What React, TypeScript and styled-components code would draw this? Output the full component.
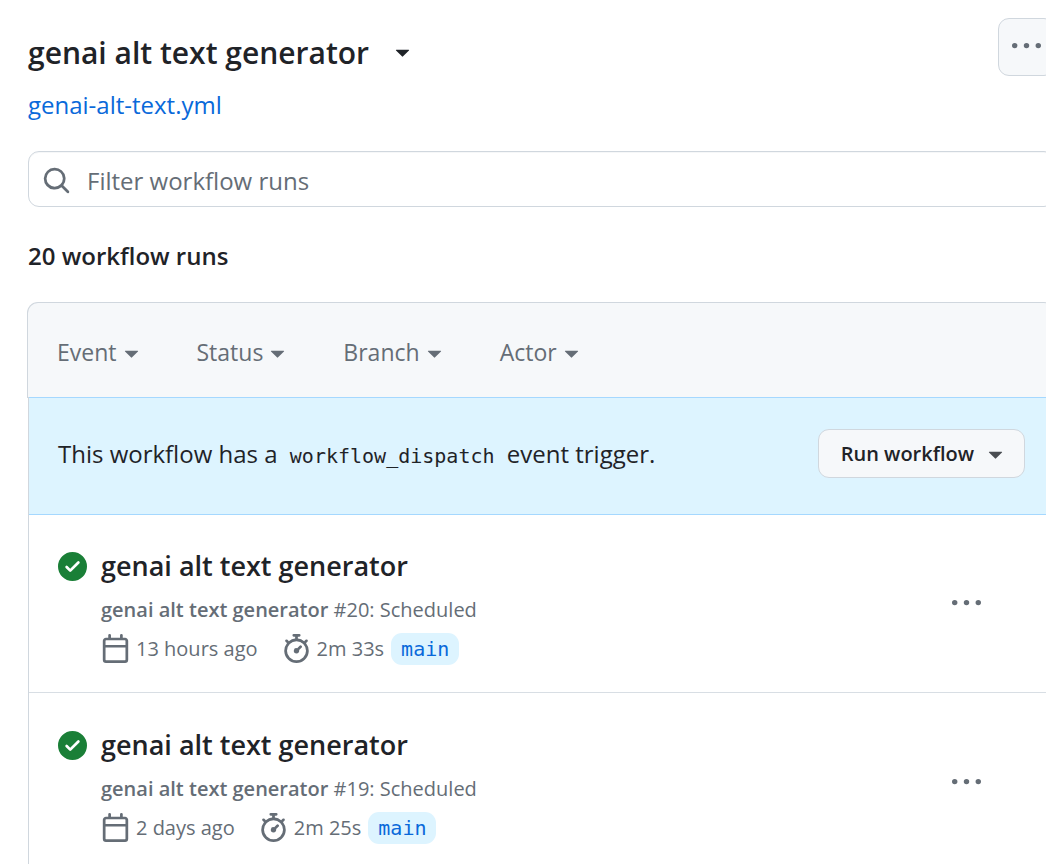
import React from "react";
import styled, { createGlobalStyle } from "styled-components";

const c = {
  fg: "#1f2328",
  muted: "#656d76",
  border: "#d0d7de",
  divider: "#d8dee4",
  subtle: "#f6f8fa",
  accent: "#0969da",
  accentBg: "#ddf4ff",
  accentBorder: "#a5d8ff",
  success: "#1a7f37",
};

const sans = `"Open Sans", "Noto Sans", sans-serif`;
const mono = `"DejaVu Sans Mono", "Liberation Mono", monospace`;

const GlobalStyle = createGlobalStyle`
  *, *::before, *::after { box-sizing: border-box; }
  body { margin: 0; background: #fff; color: ${c.fg}; font-family: ${sans}; font-size: 24px; line-height: 36px; }
  button, input { font: inherit; color: inherit; margin: 0; }
  button { cursor: pointer; }
  h1, h2, h3, p, ul { margin: 0; padding: 0; font-weight: 600; }
  a { text-decoration: none; }
`;

const Viewport = styled.div`
  overflow-x: hidden;
`;

const Page = styled.main`
  margin-right: -9px;
  padding: 18px 0 0 28px;
`;

const PageHeader = styled.header`
  display: flex;
  align-items: flex-start;
  justify-content: space-between;
`;

const Heading = styled.div`
  padding-top: 15px;
`;

const TitleRow = styled.div`
  display: flex;
  align-items: center;
  gap: 19px;
  margin-bottom: 14px;
`;

const Title = styled.h1`
  font-size: 30px;
  line-height: 40px;
`;

const PlainButton = styled.button`
  display: inline-flex;
  align-items: center;
  padding: 0;
  border: 0;
  background: none;
  color: ${c.muted};
`;

const TitleToggle = styled(PlainButton)`
  padding-bottom: 3px;
  color: ${c.fg};
`;

const FileLink = styled.a`
  color: ${c.accent};
`;

const MenuButton = styled.button`
  display: flex;
  align-items: center;
  justify-content: center;
  width: 57px;
  height: 58px;
  padding: 0 0 2px;
  color: ${c.muted};
  background: ${c.subtle};
  border: 1px solid ${c.border};
  border-radius: 11px;
`;

const Search = styled.label`
  display: flex;
  align-items: center;
  gap: 16px;
  height: 56px;
  margin-top: 28px;
  padding: 3px 13px 0;
  color: ${c.muted};
  border: 1px solid ${c.border};
  border-radius: 11px;
  box-shadow: inset 0 1px 0 rgba(208, 215, 222, 0.2);
`;

const SearchInput = styled.input`
  flex: 1;
  min-width: 0;
  padding: 0;
  border: 0;
  outline: 0;
  background: none;
  &::placeholder { color: ${c.muted}; opacity: 1; }
`;

const Count = styled.h2`
  margin: 31px 0 28px;
  font-size: 24px;
`;

const Filters = styled.div`
  display: flex;
  align-items: center;
  gap: 51px;
  height: 96px;
  margin: 0 0 -1px -1px;
  padding: 3px 29px 0;
  font-size: 23px;
  background: ${c.subtle};
  border: 1px solid ${c.border};
  border-bottom: 0;
  border-radius: 11px 11px 0 0;
`;

const BoxBody = styled.div`
  border: solid ${c.border};
  border-width: 0 1px;
`;

const Banner = styled.div`
  position: relative;
  display: flex;
  align-items: center;
  justify-content: space-between;
  height: 118px;
  padding: 0 29px 5px;
  background: ${c.accentBg};
  border: solid ${c.accentBorder};
  border-width: 1px 0;
`;

const Code = styled.code`
  padding: 0 6px;
  font-family: ${mono};
  font-size: 20px;
`;

const BannerText = styled.p`
  padding-top: 3px;
  font-weight: 400;
`;

const RunButton = styled.button`
  display: inline-flex;
  align-items: center;
  gap: 7px;
  height: 49px;
  padding: 0 14px 0 22px;
  font-size: 20px;
  font-weight: 600;
  background: ${c.subtle};
  border: 1px solid ${c.border};
  border-radius: 11px;
  svg { opacity: 0.8; }
`;

const RunList = styled.ul`
  list-style: none;
`;

const Run = styled.li`
  display: flex;
  align-items: flex-start;
  gap: 14px;
  padding: 31px 73px 25px 29px;
  font-weight: 400;
  & + & {
    padding-top: 32px;
    border-top: 1px solid ${c.divider};
  }
`;

const Status = styled.span`
  display: flex;
  padding-top: 6px;
  color: ${c.success};
`;

const RunBody = styled.div`
  flex: 1;
`;

const RunTitle = styled.h3`
  font-size: 27px;
  line-height: 40px;
  margin-bottom: 6px;
  a { color: ${c.fg}; }
`;

const RunMeta = styled.div`
  font-size: 20px;
  color: ${c.muted};
  b { font-weight: 600; }
`;

const RunStats = styled(RunMeta)`
  display: flex;
  align-items: center;
  gap: 7px;
  margin-top: 3px;
`;

const Stat = styled.span<{ $spaced?: boolean }>`
  display: inline-flex;
  align-items: center;
  gap: 6px;
  margin-right: ${(p) => (p.$spaced ? 17 : 0)}px;
  svg { margin-bottom: 2px; }
`;

const Branch = styled.a`
  padding: 0 10px;
  font-family: ${mono};
  font-size: 20px;
  line-height: 32px;
  color: ${c.accent};
  background: ${c.accentBg};
  border-radius: 11px;
`;

const RunMenu = styled(PlainButton)`
  align-self: flex-start;
  margin-top: 43px;
`;

const paths = {
  search:
    "M10.68 11.74a6 6 0 0 1-7.922-8.982 6 6 0 0 1 8.982 7.922l3.04 3.04a.749.749 0 0 1-.326 1.275.749.749 0 0 1-.734-.215ZM11.5 7a4.499 4.499 0 1 0-8.997 0A4.499 4.499 0 0 0 11.5 7Z",
  triangle:
    "m4.427 7.427 3.396 3.396a.25.25 0 0 0 .354 0l3.396-3.396A.25.25 0 0 0 11.396 7H4.604a.25.25 0 0 0-.177.427Z",
  kebab:
    "M8 9a1.5 1.5 0 1 0 0-3 1.5 1.5 0 0 0 0 3ZM1.5 9a1.5 1.5 0 1 0 0-3 1.5 1.5 0 0 0 0 3Zm13 0a1.5 1.5 0 1 0 0-3 1.5 1.5 0 0 0 0 3Z",
  check:
    "M8 16A8 8 0 1 1 8 0a8 8 0 0 1 0 16Zm3.78-9.72a.751.751 0 0 0-.018-1.042.751.751 0 0 0-1.042-.018L6.75 9.19 5.28 7.72a.751.751 0 0 0-1.042.018.751.751 0 0 0-.018 1.042l2 2a.75.75 0 0 0 1.06 0Z",
  calendar:
    "M4.75 0a.75.75 0 0 1 .75.75V2h5V.75a.75.75 0 0 1 1.5 0V2h1.25c.966 0 1.75.784 1.75 1.75v10.5A1.75 1.75 0 0 1 13.25 16H2.75A1.75 1.75 0 0 1 1 14.25V3.75C1 2.784 1.784 2 2.75 2H4V.75A.75.75 0 0 1 4.75 0ZM2.5 7.5v6.75c0 .138.112.25.25.25h10.5a.25.25 0 0 0 .25-.25V7.5Zm10.75-4H2.75a.25.25 0 0 0-.25.25V6h11V3.75a.25.25 0 0 0-.25-.25Z",
  stopwatch:
    "M5.75.75A.75.75 0 0 1 6.5 0h3a.75.75 0 0 1 0 1.5h-.75v1l-.001.041a6.724 6.724 0 0 1 3.464 1.435l.007-.006.75-.75a.749.749 0 0 1 1.275.326.749.749 0 0 1-.215.734l-.75.75-.006.007a6.75 6.75 0 1 1-10.548 0L2.72 5.03l-.75-.75a.751.751 0 0 1 .018-1.042.751.751 0 0 1 1.042-.018l.75.75.007.006A6.72 6.72 0 0 1 7.25 2.541V1.5H6.5a.75.75 0 0 1-.75-.75ZM8 14.5a5.25 5.25 0 1 0-.001-10.501A5.25 5.25 0 0 0 8 14.5Zm.389-6.7 1.33-1.33a.75.75 0 1 1 1.061 1.06L9.45 8.861A1.503 1.503 0 0 1 8 10.75a1.499 1.499 0 1 1 .389-2.95Z",
};

const Svg = styled.svg`
  display: block;
  flex: none;
  width: 29px;
  height: 29px;
  fill: currentColor;
`;

function Icon({ name }: { name: keyof typeof paths }) {
  return (
    <Svg viewBox="0 0 16 16" aria-hidden="true">
      <path d={paths[name]} />
    </Svg>
  );
}

const filters = ["Event", "Status", "Branch", "Actor"];

const runs = [
  { id: 20, when: "13 hours ago", took: "2m 33s" },
  { id: 19, when: "2 days ago", took: "2m 25s" },
];

export default function App() {
  return (
    <Viewport>
      <GlobalStyle />
      <Page>
        <PageHeader>
          <Heading>
            <TitleRow>
              <Title>genai alt text generator</Title>
              <TitleToggle aria-label="Switch workflow">
                <Icon name="triangle" />
              </TitleToggle>
            </TitleRow>
            <FileLink href="#file">genai-alt-text.yml</FileLink>
          </Heading>
          <MenuButton aria-label="Workflow options">
            <Icon name="kebab" />
          </MenuButton>
        </PageHeader>
        <Search>
          <Icon name="search" />
          <SearchInput type="text" placeholder="Filter workflow runs" aria-label="Filter workflow runs" />
        </Search>
        <Count>20 workflow runs</Count>
        <section>
          <Filters>
            {filters.map((f) => (
              <PlainButton key={f}>
                {f}
                <Icon name="triangle" />
              </PlainButton>
            ))}
          </Filters>
          <BoxBody>
            <Banner>
              <BannerText>
                This workflow has a <Code>workflow_dispatch</Code> event trigger.
              </BannerText>
              <RunButton>
                Run workflow
                <Icon name="triangle" />
              </RunButton>
            </Banner>
            <RunList>
              {runs.map((r) => (
                <Run key={r.id}>
                  <Status role="img" aria-label="Completed successfully">
                    <Icon name="check" />
                  </Status>
                  <RunBody>
                    <RunTitle>
                      <a href={`#run-${r.id}`}>genai alt text generator</a>
                    </RunTitle>
                    <RunMeta>
                      <b>genai alt text generator</b> #{r.id}: Scheduled
                    </RunMeta>
                    <RunStats>
                      <Stat $spaced>
                        <Icon name="calendar" />
                        {r.when}
                      </Stat>
                      <Stat>
                        <Icon name="stopwatch" />
                        {r.took}
                      </Stat>
                      <Branch href="#main">main</Branch>
                    </RunStats>
                  </RunBody>
                  <RunMenu aria-label={`Options for run ${r.id}`}>
                    <Icon name="kebab" />
                  </RunMenu>
                </Run>
              ))}
            </RunList>
          </BoxBody>
        </section>
      </Page>
    </Viewport>
  );
}
